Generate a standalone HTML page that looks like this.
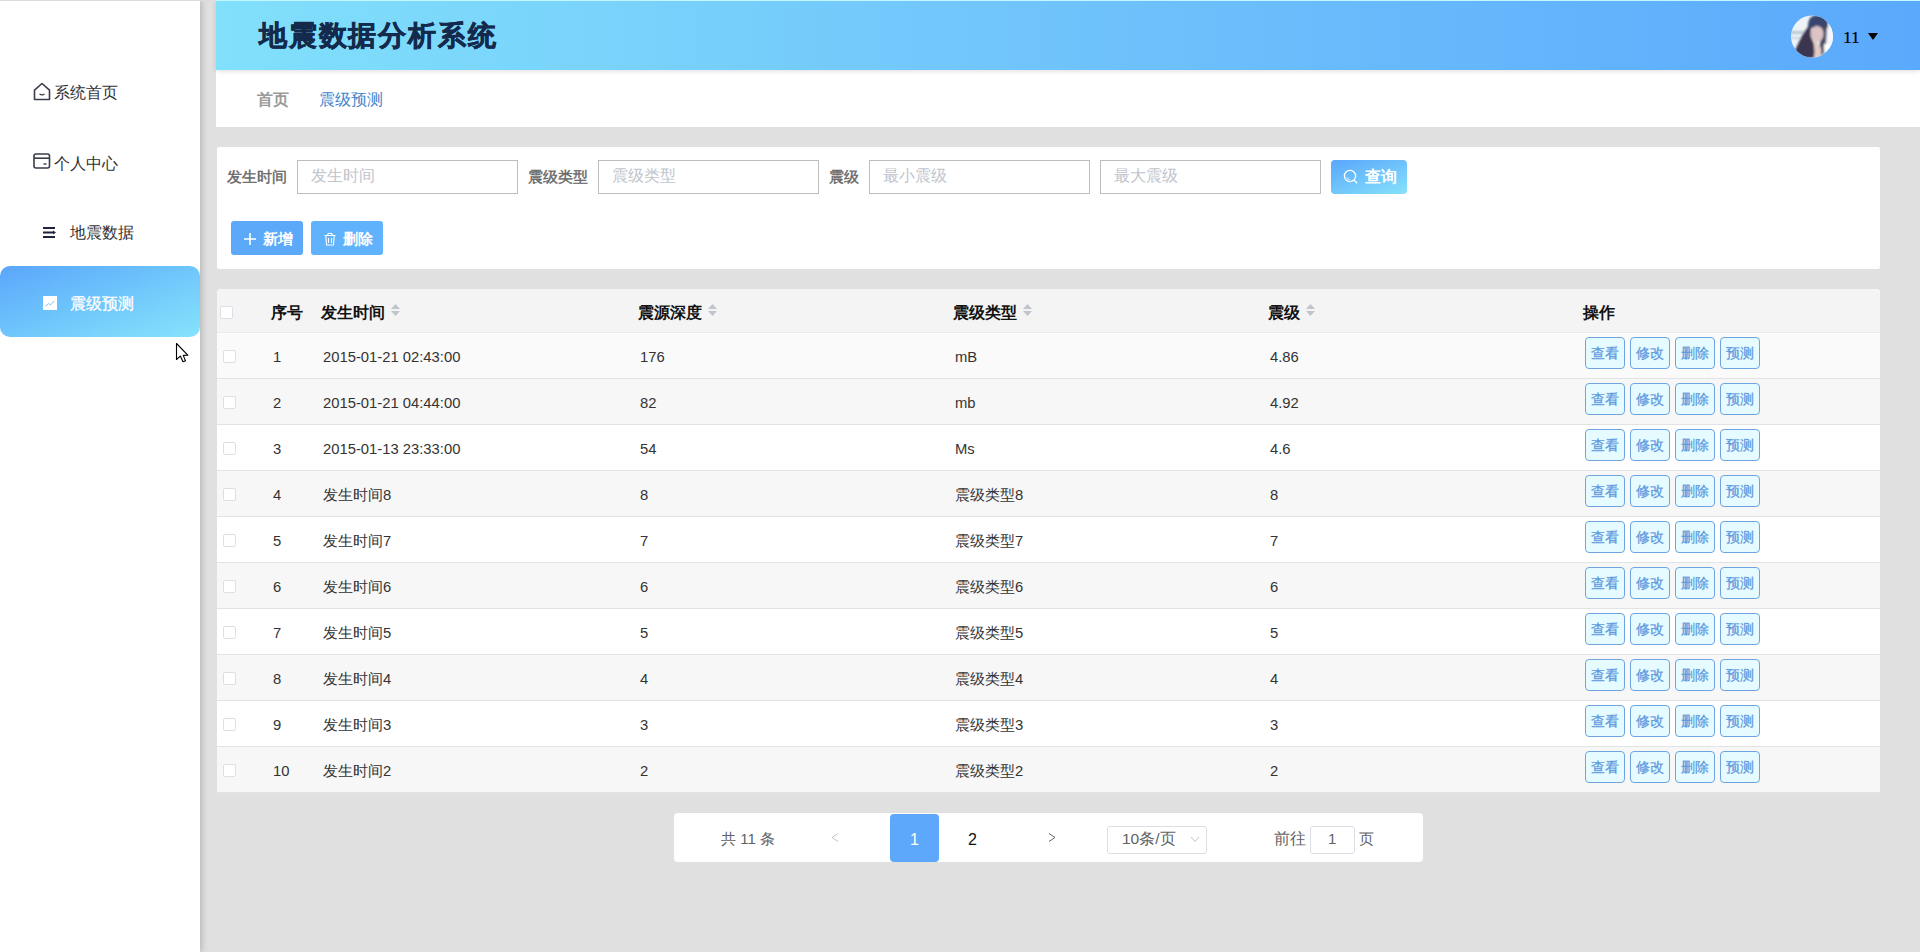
<!DOCTYPE html><html><head><meta charset="utf-8"><title>地震数据分析系统</title><style>
*{box-sizing:border-box;margin:0;padding:0}
html,body{width:1920px;height:952px;overflow:hidden}
body{background:#e0e0e0;font-family:"Liberation Sans",sans-serif;position:relative;color:#333}
.abs{position:absolute}
#side{left:0;top:0;width:200px;height:952px;background:#fff;box-shadow:2px 0 6px rgba(0,0,0,.18);z-index:2}
#topline{left:0;top:0;width:216px;height:1px;background:#dcdcdc;z-index:5}
.mi{position:absolute;left:0;width:200px;height:71px;color:#303133;font-size:16px}
.mi .t{position:absolute;line-height:16px;white-space:nowrap}
#act{left:0;top:266px;width:200px;height:71px;border-radius:10px;background:linear-gradient(160deg,#5ba6fb 0%,#6ec6fb 50%,#86e3fb 100%)}
#hdr{left:216px;top:0;width:1704px;height:70px;box-shadow:0 1px 5px rgba(0,0,0,.14);z-index:1;background:linear-gradient(90deg,#81e0fb 0%,#6fc3fb 50%,#5ba9fc 100%);border-top:1px solid #c4f6ff}
#title{left:259px;top:18px;z-index:2;font-size:28px;font-weight:700;letter-spacing:1.8px;color:#142a4c;-webkit-text-stroke:0.6px #142a4c;line-height:36px;white-space:nowrap}
#bc{left:216px;top:70px;width:1704px;height:57px;background:#fff}
#panel{left:217px;top:147px;width:1663px;height:122px;background:#fff;border-radius:2px}
.lbl{position:absolute;font-size:15px;font-weight:400;-webkit-text-stroke:0.4px #666;color:#666;line-height:16px;white-space:nowrap}
.inp{position:absolute;top:160px;width:221px;height:34px;border:1px solid #bdbdbd;background:#fff}
.inp span{position:absolute;left:13px;top:7px;font-size:16px;line-height:16px;color:#c0c4cc;white-space:nowrap}
#qbtn{left:1331px;top:160px;width:76px;height:34px;border-radius:4px;background:linear-gradient(160deg,#5aa6fb 0%,#85e2fb 100%)}
.btn{position:absolute;top:221px;width:72px;height:34px;border-radius:3px}
#tbl{left:217px;top:289px;width:1663px;height:503px;background:#fff;border-radius:4px 4px 0 0;overflow:hidden}
.th{position:absolute;top:304.5px;font-size:16px;font-weight:bold;color:#111;line-height:16px;white-space:nowrap}
.sort{position:absolute;width:9px;height:12px}
.row{position:absolute;left:217px;width:1663px;height:46px;border-bottom:1px solid #e3e3e3}
.td{position:absolute;font-size:14.8px;color:#333;line-height:16px;white-space:nowrap}
.cb{position:absolute;width:13px;height:13px;border:1px solid #dcdfe6;background:#fff;border-radius:2px}
.ab{position:absolute;width:40px;height:32px;border:1px solid #6ea5e0;border-radius:4px;background:#e6fbff;color:#5b98de;font-size:14px;font-weight:400;-webkit-text-stroke:0.25px #5b98de;text-align:center;line-height:30px}
#pg{left:674px;top:813px;width:749px;height:49px;background:#fff;border-radius:4px}
.pt{position:absolute;font-size:15px;line-height:16px;color:#606266;white-space:nowrap}
</style></head><body>
<div id="side" class="abs">
<svg class="abs" style="left:33px;top:82px" width="18" height="19" viewBox="0 0 18 19"><path d="M1.5 8.2 L9 1.5 L16.5 8.2 L16.5 17.5 L1.5 17.5 Z" fill="none" stroke="#3a3d4a" stroke-width="1.6" stroke-linejoin="round"/><path d="M6.5 12 Q9 13.8 11.5 12" fill="none" stroke="#3a3d4a" stroke-width="1.4"/></svg>
<div class="mi" style="top:56px"><span class="t" style="left:54px;top:29px">系统首页</span></div>
<svg class="abs" style="left:33px;top:153px" width="18" height="17" viewBox="0 0 18 17"><rect x="1" y="1" width="15.5" height="14" rx="2" fill="none" stroke="#3a3d4a" stroke-width="1.6"/><line x1="1" y1="5.2" x2="16.5" y2="5.2" stroke="#3a3d4a" stroke-width="1.6"/><line x1="10.5" y1="11" x2="13.5" y2="11" stroke="#3a3d4a" stroke-width="1.4"/></svg>
<div class="mi" style="top:127px"><span class="t" style="left:54px;top:29px">个人中心</span></div>
<svg class="abs" style="left:42px;top:226px" width="16" height="13" viewBox="0 0 16 13"><rect x="1" y="1" width="12" height="2" fill="#1f2340"/><rect x="1" y="5.5" width="10" height="2" fill="#1f2340"/><path d="M11 4.5 L14 6.5 L11 8.5Z" fill="#1f2340"/><rect x="1" y="10" width="12" height="2" fill="#1f2340"/></svg>
<div class="mi" style="top:197px"><span class="t" style="left:70px;top:28px">地震数据</span></div>
<div id="act" class="abs"></div>
<svg class="abs" style="left:43px;top:296px" width="14" height="14" viewBox="0 0 14 14"><rect x="0" y="0" width="14" height="14" fill="#fff"/><path d="M2.5 10.5 L5.5 7.5 L7.5 9 L11 5" fill="none" stroke="#7cb8f0" stroke-width="0.9"/></svg>
<div class="mi" style="top:266px;color:#fff"><span class="t" style="left:70px;top:30px;-webkit-text-stroke:0.3px #fff">震级预测</span></div>
</div>
<div id="topline" class="abs"></div>
<div id="hdr" class="abs"></div>
<div id="title" class="abs">地震数据分析系统</div>
<svg class="abs" style="left:1790px;top:14px;z-index:3" width="44" height="44" viewBox="0 0 44 44"><defs><clipPath id="cc"><circle cx="22" cy="22.5" r="21"/></clipPath><filter id="bl" x="-10%" y="-10%" width="120%" height="120%"><feGaussianBlur stdDeviation="0.9"/></filter></defs><g clip-path="url(#cc)"><rect width="44" height="44" fill="#eef3f8"/><g filter="url(#bl)"><rect x="0" y="17" width="18" height="3" fill="#b8c8d6"/><rect x="0" y="23" width="14" height="2" fill="#c9d5e0"/><rect x="34" y="10" width="10" height="26" fill="#f4f7fb"/><path d="M18 12 Q18 1 28 1 Q36 1 38 9 L38 14 L18 14Z" fill="#39456e"/><path d="M19 12 Q12 20 8 30 Q4 38 2 44 L26 44 L24 30 Q20 22 21 14Z" fill="#3b3550"/><path d="M32 12 L37 12 L36 30 L33 40 L30 44 L26 44 L30 30Z" fill="#4a4660"/><ellipse cx="27" cy="20" rx="6.5" ry="8" fill="#dcc4c6"/><path d="M24 26 Q29 30 31 34 L31 44 L24 44 Q25 36 24 30Z" fill="#e2cdc4"/><path d="M34 30 L40 30 L40 36 L34 36Z" fill="#ffffff"/></g></g></svg>
<div class="abs" style="z-index:3;left:1843px;top:27px;font-family:'Liberation Serif',serif;font-size:17.5px;-webkit-text-stroke:0.2px #000;line-height:20px;color:#000">11</div>
<svg class="abs" style="left:1868px;top:33px;z-index:3" width="10" height="7" viewBox="0 0 10 7"><path d="M0 0 L10 0 L5 7Z" fill="#000"/></svg>
<div id="bc" class="abs"></div>
<div class="abs" style="left:257px;top:92px;font-size:16px;line-height:16px;font-weight:bold;color:#9a9a9a">首页</div>
<div class="abs" style="left:319px;top:92px;font-size:16px;line-height:16px;color:#3e84cc">震级预测</div>
<div id="panel" class="abs"></div>
<div class="lbl" style="left:227px;top:169px">发生时间</div>
<div class="inp" style="left:297px"><span>发生时间</span></div>
<div class="lbl" style="left:528px;top:169px">震级类型</div>
<div class="inp" style="left:598px"><span>震级类型</span></div>
<div class="lbl" style="left:829px;top:169px">震级</div>
<div class="inp" style="left:869px"><span>最小震级</span></div>
<div class="inp" style="left:1100px"><span>最大震级</span></div>
<div id="qbtn" class="abs"></div>
<svg class="abs" style="left:1343px;top:169px" width="16" height="16" viewBox="0 0 16 16"><circle cx="7" cy="7" r="5.6" fill="none" stroke="#fff" stroke-width="1.3"/><path d="M11.2 11.2 L14.2 14.2" stroke="#fff" stroke-width="1.3"/><path d="M3.6 8.2 Q4.5 10.4 6.8 10.8" fill="none" stroke="#fff" stroke-width="0.8"/></svg>
<div class="abs" style="left:1365px;top:169px;font-size:16px;line-height:16px;font-weight:bold;color:#fff">查询</div>
<div class="btn" style="left:231px;background:#5ca9f9"></div>
<svg class="abs" style="left:243px;top:232px" width="14" height="14" viewBox="0 0 14 14"><path d="M7 1 V13 M1 7 H13" stroke="#fff" stroke-width="1.6"/></svg>
<div class="abs" style="left:263px;top:231px;font-size:15px;line-height:16px;font-weight:bold;color:#fff">新增</div>
<div class="btn" style="left:311px;background:#5fb2fb"></div>
<svg class="abs" style="left:323px;top:232px" width="14" height="14" viewBox="0 0 14 14"><path d="M1.5 3.5 H12.5 M4.5 3.5 Q4.5 1.2 7 1.2 Q9.5 1.2 9.5 3.5 M2.8 3.5 L3.5 13 H10.5 L11.2 3.5 M5.5 6 V11 M8.5 6 V11" fill="none" stroke="#fff" stroke-width="1.1"/></svg>
<div class="abs" style="left:343px;top:231px;font-size:15px;line-height:16px;font-weight:bold;color:#fff">删除</div>
<div id="tbl" class="abs"></div>
<div class="abs" style="left:217px;top:289px;width:1663px;height:44px;background:#f4f4f4;border-bottom:1px solid #ededed;border-radius:5px 5px 0 0"></div>
<div class="cb" style="left:220px;top:306px"></div>
<div class="th" style="left:271px">序号</div>
<div class="th" style="left:321px">发生时间</div>
<svg class="sort" style="left:391px;top:304px" viewBox="0 0 9 12"><path d="M4.5 0 L9 5 H0Z" fill="#c0c4cc"/><path d="M0 7 H9 L4.5 12Z" fill="#c0c4cc"/></svg>
<div class="th" style="left:638px">震源深度</div>
<svg class="sort" style="left:708px;top:304px" viewBox="0 0 9 12"><path d="M4.5 0 L9 5 H0Z" fill="#c0c4cc"/><path d="M0 7 H9 L4.5 12Z" fill="#c0c4cc"/></svg>
<div class="th" style="left:953px">震级类型</div>
<svg class="sort" style="left:1023px;top:304px" viewBox="0 0 9 12"><path d="M4.5 0 L9 5 H0Z" fill="#c0c4cc"/><path d="M0 7 H9 L4.5 12Z" fill="#c0c4cc"/></svg>
<div class="th" style="left:1268px">震级</div>
<svg class="sort" style="left:1306px;top:304px" viewBox="0 0 9 12"><path d="M4.5 0 L9 5 H0Z" fill="#c0c4cc"/><path d="M0 7 H9 L4.5 12Z" fill="#c0c4cc"/></svg>
<div class="th" style="left:1583px">操作</div>
<div class="row" style="top:333px;background:#fafafa;box-shadow:inset 0 1px #fff"></div>
<div class="cb" style="left:223px;top:350px"></div>
<div class="td" style="left:273px;top:349px">1</div>
<div class="td" style="left:323px;top:349px">2015-01-21 02:43:00</div>
<div class="td" style="left:640px;top:349px">176</div>
<div class="td" style="left:955px;top:349px">mB</div>
<div class="td" style="left:1270px;top:349px">4.86</div>
<div class="ab" style="left:1585px;top:337px">查看</div>
<div class="ab" style="left:1630px;top:337px">修改</div>
<div class="ab" style="left:1675px;top:337px">删除</div>
<div class="ab" style="left:1720px;top:337px">预测</div>
<div class="row" style="top:379px;background:#f7f7f7"></div>
<div class="cb" style="left:223px;top:396px"></div>
<div class="td" style="left:273px;top:395px">2</div>
<div class="td" style="left:323px;top:395px">2015-01-21 04:44:00</div>
<div class="td" style="left:640px;top:395px">82</div>
<div class="td" style="left:955px;top:395px">mb</div>
<div class="td" style="left:1270px;top:395px">4.92</div>
<div class="ab" style="left:1585px;top:383px">查看</div>
<div class="ab" style="left:1630px;top:383px">修改</div>
<div class="ab" style="left:1675px;top:383px">删除</div>
<div class="ab" style="left:1720px;top:383px">预测</div>
<div class="row" style="top:425px;background:#fff"></div>
<div class="cb" style="left:223px;top:442px"></div>
<div class="td" style="left:273px;top:441px">3</div>
<div class="td" style="left:323px;top:441px">2015-01-13 23:33:00</div>
<div class="td" style="left:640px;top:441px">54</div>
<div class="td" style="left:955px;top:441px">Ms</div>
<div class="td" style="left:1270px;top:441px">4.6</div>
<div class="ab" style="left:1585px;top:429px">查看</div>
<div class="ab" style="left:1630px;top:429px">修改</div>
<div class="ab" style="left:1675px;top:429px">删除</div>
<div class="ab" style="left:1720px;top:429px">预测</div>
<div class="row" style="top:471px;background:#f7f7f7"></div>
<div class="cb" style="left:223px;top:488px"></div>
<div class="td" style="left:273px;top:487px">4</div>
<div class="td" style="left:323px;top:487px">发生时间8</div>
<div class="td" style="left:640px;top:487px">8</div>
<div class="td" style="left:955px;top:487px">震级类型8</div>
<div class="td" style="left:1270px;top:487px">8</div>
<div class="ab" style="left:1585px;top:475px">查看</div>
<div class="ab" style="left:1630px;top:475px">修改</div>
<div class="ab" style="left:1675px;top:475px">删除</div>
<div class="ab" style="left:1720px;top:475px">预测</div>
<div class="row" style="top:517px;background:#fff"></div>
<div class="cb" style="left:223px;top:534px"></div>
<div class="td" style="left:273px;top:533px">5</div>
<div class="td" style="left:323px;top:533px">发生时间7</div>
<div class="td" style="left:640px;top:533px">7</div>
<div class="td" style="left:955px;top:533px">震级类型7</div>
<div class="td" style="left:1270px;top:533px">7</div>
<div class="ab" style="left:1585px;top:521px">查看</div>
<div class="ab" style="left:1630px;top:521px">修改</div>
<div class="ab" style="left:1675px;top:521px">删除</div>
<div class="ab" style="left:1720px;top:521px">预测</div>
<div class="row" style="top:563px;background:#f7f7f7"></div>
<div class="cb" style="left:223px;top:580px"></div>
<div class="td" style="left:273px;top:579px">6</div>
<div class="td" style="left:323px;top:579px">发生时间6</div>
<div class="td" style="left:640px;top:579px">6</div>
<div class="td" style="left:955px;top:579px">震级类型6</div>
<div class="td" style="left:1270px;top:579px">6</div>
<div class="ab" style="left:1585px;top:567px">查看</div>
<div class="ab" style="left:1630px;top:567px">修改</div>
<div class="ab" style="left:1675px;top:567px">删除</div>
<div class="ab" style="left:1720px;top:567px">预测</div>
<div class="row" style="top:609px;background:#fff"></div>
<div class="cb" style="left:223px;top:626px"></div>
<div class="td" style="left:273px;top:625px">7</div>
<div class="td" style="left:323px;top:625px">发生时间5</div>
<div class="td" style="left:640px;top:625px">5</div>
<div class="td" style="left:955px;top:625px">震级类型5</div>
<div class="td" style="left:1270px;top:625px">5</div>
<div class="ab" style="left:1585px;top:613px">查看</div>
<div class="ab" style="left:1630px;top:613px">修改</div>
<div class="ab" style="left:1675px;top:613px">删除</div>
<div class="ab" style="left:1720px;top:613px">预测</div>
<div class="row" style="top:655px;background:#f7f7f7"></div>
<div class="cb" style="left:223px;top:672px"></div>
<div class="td" style="left:273px;top:671px">8</div>
<div class="td" style="left:323px;top:671px">发生时间4</div>
<div class="td" style="left:640px;top:671px">4</div>
<div class="td" style="left:955px;top:671px">震级类型4</div>
<div class="td" style="left:1270px;top:671px">4</div>
<div class="ab" style="left:1585px;top:659px">查看</div>
<div class="ab" style="left:1630px;top:659px">修改</div>
<div class="ab" style="left:1675px;top:659px">删除</div>
<div class="ab" style="left:1720px;top:659px">预测</div>
<div class="row" style="top:701px;background:#fff"></div>
<div class="cb" style="left:223px;top:718px"></div>
<div class="td" style="left:273px;top:717px">9</div>
<div class="td" style="left:323px;top:717px">发生时间3</div>
<div class="td" style="left:640px;top:717px">3</div>
<div class="td" style="left:955px;top:717px">震级类型3</div>
<div class="td" style="left:1270px;top:717px">3</div>
<div class="ab" style="left:1585px;top:705px">查看</div>
<div class="ab" style="left:1630px;top:705px">修改</div>
<div class="ab" style="left:1675px;top:705px">删除</div>
<div class="ab" style="left:1720px;top:705px">预测</div>
<div class="row" style="top:747px;background:#f7f7f7"></div>
<div class="cb" style="left:223px;top:764px"></div>
<div class="td" style="left:273px;top:763px">10</div>
<div class="td" style="left:323px;top:763px">发生时间2</div>
<div class="td" style="left:640px;top:763px">2</div>
<div class="td" style="left:955px;top:763px">震级类型2</div>
<div class="td" style="left:1270px;top:763px">2</div>
<div class="ab" style="left:1585px;top:751px">查看</div>
<div class="ab" style="left:1630px;top:751px">修改</div>
<div class="ab" style="left:1675px;top:751px">删除</div>
<div class="ab" style="left:1720px;top:751px">预测</div>
<div id="pg" class="abs"></div>
<div class="pt" style="left:721px;top:831px">共 11 条</div>
<svg class="abs" style="left:831px;top:833px" width="8" height="9" viewBox="0 0 8 9"><path d="M7 0.5 L1 4.5 L7 8.5" fill="none" stroke="#c0c4cc" stroke-width="1"/></svg>
<div class="abs" style="left:890px;top:814px;width:49px;height:48px;background:#5ea8fb;border-radius:4px"></div>
<div class="pt" style="left:910px;top:832px;color:#fff;font-size:16px">1</div>
<div class="pt" style="left:968px;top:832px;color:#111;font-size:16px">2</div>
<svg class="abs" style="left:1048px;top:833px" width="8" height="9" viewBox="0 0 8 9"><path d="M1 0.5 L7 4.5 L1 8.5" fill="none" stroke="#606266" stroke-width="1"/></svg>
<div class="abs" style="left:1107px;top:826px;width:100px;height:28px;border:1px solid #dcdfe6;border-radius:3px"></div>
<div class="pt" style="left:1122px;top:831px;font-size:15.5px">10条/页</div>
<svg class="abs" style="left:1190px;top:836px" width="10" height="7" viewBox="0 0 10 7"><path d="M1 1 L5 5.5 L9 1" fill="none" stroke="#c0c4cc" stroke-width="1"/></svg>
<div class="pt" style="left:1274px;top:831px;font-size:15.5px">前往</div>
<div class="abs" style="left:1310px;top:826px;width:45px;height:28px;border:1px solid #dcdfe6;border-radius:3px"></div>
<div class="pt" style="left:1328px;top:831px">1</div>
<div class="pt" style="left:1359px;top:831px">页</div>
<svg class="abs" style="left:175px;top:342px;z-index:10" width="16" height="22" viewBox="0 0 16 22"><path d="M1.5 1.5 L1.5 17.5 L5.3 14.1 L8 19.8 L10.5 18.7 L8.2 13.4 L12.8 13.2 Z" fill="#fff" stroke="#000" stroke-width="1.1" stroke-linejoin="round"/></svg>
</body></html>
